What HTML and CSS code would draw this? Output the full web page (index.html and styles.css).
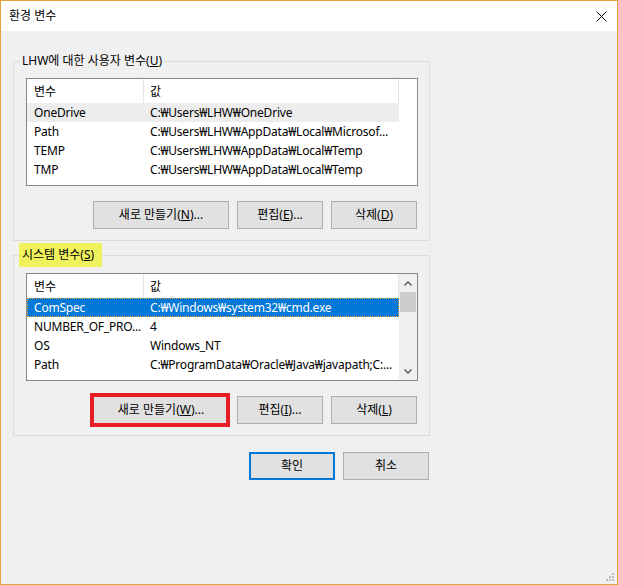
FILE: index.html
```html
<!DOCTYPE html>
<html lang="ko">
<head>
<meta charset="utf-8">
<title>환경 변수</title>
<link rel="stylesheet" href="styles.css">
</head>
<body>
<div class="window">
  <div class="titlebar">
    <span class="title">환경 변수</span>
    <svg class="close" width="11" height="11" viewBox="0 0 11 11" aria-hidden="true">
      <path d="M0.5 0.5 L10.5 10.5 M10.5 0.5 L0.5 10.5" stroke="#000" stroke-width="1" fill="none"/>
    </svg>
  </div>
  <div class="content">
    <fieldset class="group">
      <legend>LHW에 대한 사용자 변수(<u>U</u>)</legend>
      <div class="listview">
        <div class="lv-table">
          <div class="lv-head"><span class="col1">변수</span><span class="col2">값</span></div>
          <div class="lv-row lv-row--inactive"><span class="col1">OneDrive</span><span class="col2">C:₩Users₩LHW₩OneDrive</span></div>
          <div class="lv-row"><span class="col1">Path</span><span class="col2">C:₩Users₩LHW₩AppData₩Local₩Microsof...</span></div>
          <div class="lv-row"><span class="col1">TEMP</span><span class="col2">C:₩Users₩LHW₩AppData₩Local₩Temp</span></div>
          <div class="lv-row"><span class="col1">TMP</span><span class="col2">C:₩Users₩LHW₩AppData₩Local₩Temp</span></div>
        </div>
      </div>
      <div class="btnrow">
        <button class="btn btn--wide">새로 만들기(<u>N</u>)...</button>
        <button class="btn">편집(<u>E</u>)...</button>
        <button class="btn">삭제(<u>D</u>)</button>
      </div>
    </fieldset>

    <fieldset class="group group--system">
      <legend>시스템 변수(<u>S</u>)</legend>
      <div class="listview">
        <div class="lv-table">
          <div class="lv-head"><span class="col1">변수</span><span class="col2">값</span></div>
          <div class="lv-row lv-row--selected"><span class="col1">ComSpec</span><span class="col2">C:₩Windows₩system32₩cmd.exe</span></div>
          <div class="lv-row"><span class="col1">NUMBER_OF_PRO...</span><span class="col2">4</span></div>
          <div class="lv-row"><span class="col1">OS</span><span class="col2">Windows_NT</span></div>
          <div class="lv-row"><span class="col1">Path</span><span class="col2">C:₩ProgramData₩Oracle₩Java₩javapath;C:...</span></div>
        </div>
        <div class="scrollbar">
          <div class="sb-arrow">
            <svg width="8" height="5" viewBox="0 0 8 5"><path d="M0.5 4.5 L4 1 L7.5 4.5" stroke="#555" stroke-width="1.3" fill="none"/></svg>
          </div>
          <div class="sb-thumb"></div>
          <div class="sb-track"></div>
          <div class="sb-arrow">
            <svg width="8" height="5" viewBox="0 0 8 5"><path d="M0.5 0.5 L4 4 L7.5 0.5" stroke="#555" stroke-width="1.3" fill="none"/></svg>
          </div>
        </div>
      </div>
      <div class="btnrow">
        <button class="btn btn--wide btn--marked">새로 만들기(<u>W</u>)...</button>
        <button class="btn">편집(<u>I</u>)...</button>
        <button class="btn">삭제(<u>L</u>)</button>
      </div>
    </fieldset>

    <div class="dlg-btns">
      <button class="btn btn--default">확인</button>
      <button class="btn">취소</button>
    </div>

    <svg class="grip" width="10" height="10" viewBox="0 0 10 10" aria-hidden="true">
      <rect x="7" y="0" width="2" height="2" fill="#bcbcbc"/>
      <rect x="4" y="3" width="2" height="2" fill="#bcbcbc"/>
      <rect x="7" y="3" width="2" height="2" fill="#bcbcbc"/>
      <rect x="1" y="6" width="2" height="2" fill="#bcbcbc"/>
      <rect x="4" y="6" width="2" height="2" fill="#bcbcbc"/>
      <rect x="7" y="6" width="2" height="2" fill="#bcbcbc"/>
    </svg>
  </div>
</div>
</body>
</html>
```

FILE: styles.css
```css
* { box-sizing: border-box; }

html, body {
  margin: 0;
  padding: 0;
}

body {
  font-family: "Noto Sans", "Noto Sans CJK KR", sans-serif;
  font-size: 12px;
  color: #000;
  background: #f0f0f0;
}

.window {
  width: 618px;
  height: 585px;
  border: 1px solid #e3a23e;
  display: flex;
  flex-direction: column;
  background: #f0f0f0;
}

.titlebar {
  height: 30px;
  flex: none;
  background: #fff;
  display: flex;
  align-items: center;
  padding-left: 8px;
}

.title {
  flex: 1;
  line-height: 16px;
}

.close {
  display: block;
  margin-right: 10px;
}

.content {
  flex: 1;
  display: flex;
  flex-direction: column;
  padding: 22px 0 0 12px;
}

.group {
  margin: 0;
  width: 417px;
  min-width: 0;
  border: 1px solid #dcdcdc;
  padding: 9px 11px 11px 12px;
}

.group legend {
  padding: 0 2px;
  margin-left: -6px;
  line-height: 16px;
}

.group--system {
  margin-top: 2px;
  padding-top: 6px;
}

.group--system legend {
  background: #eff25c;
  padding: 4px 8px 4px 3px;
  margin-left: -7px;
}

u { text-decoration: underline; text-underline-offset: 1px; }

.listview {
  height: 108px;
  border: 1px solid #828790;
  background: #fff;
  display: flex;
}

.lv-table {
  width: 372px;
  flex: none;
}

.lv-head {
  display: flex;
  height: 24px;
}

.lv-head span {
  line-height: 25px;
  border-right: 1px solid #e5e5e5;
}

.col1 {
  width: 117px;
  padding-left: 7px;
}

.col2 {
  width: 255px;
  padding-left: 6px;
}

.lv-row {
  display: flex;
  height: 19px;
  line-height: 20px;
}

.lv-row span {
  white-space: nowrap;
  overflow: hidden;
  text-overflow: clip;
  letter-spacing: -0.2px;
}

.lv-row--inactive {
  background: #ededed;
}

.lv-row--selected {
  background: #0078d7;
  color: #fff;
  outline: 1px dotted #f2a540;
  outline-offset: -1px;
}

.scrollbar {
  flex: 1;
  display: flex;
  flex-direction: column;
  background: #f0f0f0;
}

.sb-arrow {
  height: 18px;
  display: flex;
  align-items: center;
  justify-content: center;
}

.sb-thumb {
  height: 20px;
  margin: 0 1px;
  background: #cdcdcd;
}

.sb-track {
  flex: 1;
}

.btnrow {
  display: flex;
  justify-content: flex-end;
  gap: 8px;
  margin-top: 15px;
  margin-right: 1px;
}

.btn {
  height: 28px;
  width: 86px;
  padding: 0;
  border: 1px solid #adadad;
  background: #e1e1e1;
  font: inherit;
  color: #000;
  line-height: 16px;
}

.btn--wide {
  width: 136px;
}

.btn--marked {
  position: relative;
}

.btn--marked::after {
  content: "";
  position: absolute;
  left: -4px;
  top: -4px;
  right: -2px;
  bottom: -4px;
  border: 4px solid #e81d25;
}

.btn--default {
  border: 2px solid #0078d7;
}

.dlg-btns {
  display: flex;
  justify-content: flex-end;
  gap: 8px;
  width: 417px;
  padding-right: 1px;
  margin-top: 16px;
}

.grip {
  display: block;
  margin-top: auto;
  align-self: flex-end;
  margin-right: 2px;
  margin-bottom: 1px;
}
```
